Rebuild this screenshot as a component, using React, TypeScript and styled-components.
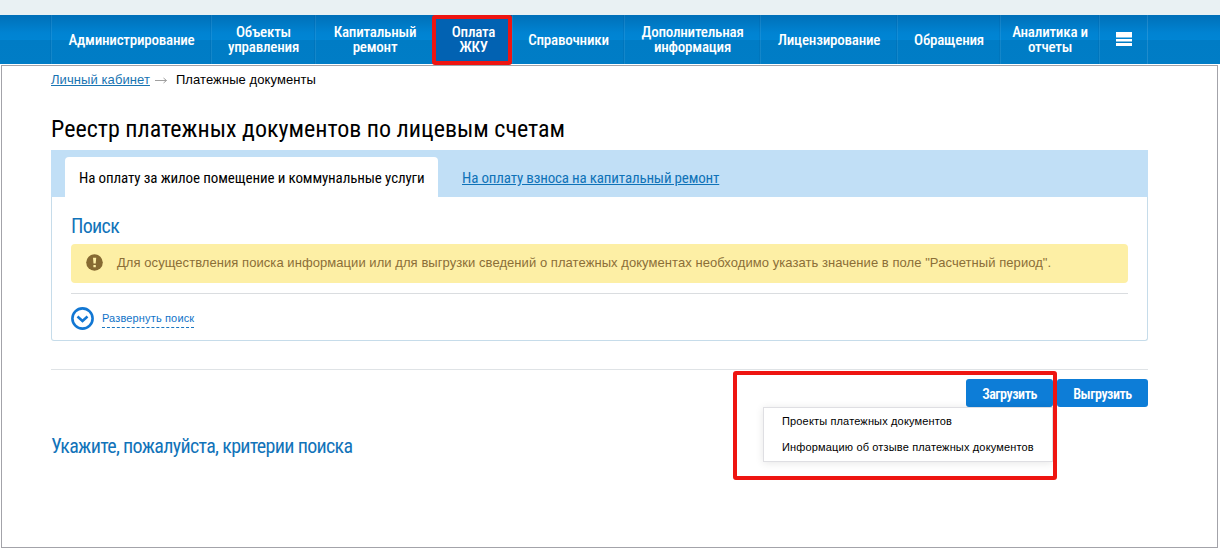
import React from "react";
import styled, { createGlobalStyle, css } from "styled-components";

const GlobalStyle = createGlobalStyle`
  * { box-sizing: border-box; }
  body {
    margin: 0;
    background: #fff;
    font-family: "Liberation Sans", Arial, sans-serif;
    color: #000;
  }
`;

const condensed = css`
  font-family: "Roboto Condensed", Roboto, sans-serif;
  font-stretch: 75%;
`;

const Page = styled.div`
  width: 1220px;
  height: 550px;
  overflow: hidden;
`;

const TopStrip = styled.div`
  height: 15px;
  background: #e9f1f3;
`;

const Nav = styled.nav`
  display: flex;
  height: 49px;
  padding-left: 51px;
  background: linear-gradient(#0070b8 0, #0083d2 18px, #0085d4 25px, #007cc5 25px, #007dc6 100%);
`;

const NavItem = styled.a<{ $width: number; $active?: boolean }>`
  ${condensed}
  position: relative;
  display: flex;
  align-items: center;
  justify-content: center;
  width: ${(p) => p.$width}px;
  height: 49px;
  padding-top: 1px;
  border-left: 1px solid rgba(255, 255, 255, 0.08);
  box-shadow: -1px 0 0 rgba(0, 60, 120, 0.1);
  color: #fff;
  font-size: 15px;
  font-weight: 500;
  letter-spacing: -0.22px;
  line-height: 15px;
  text-align: center;
  white-space: pre-line;
  ${(p) => p.$active && "background: #0262b2;"}
`;

const MenuIcon = styled.svg`
  margin-bottom: 2px;
`;

const NavEnd = styled.div`
  width: 1px;
  background: rgba(255, 255, 255, 0.12);
`;

const Highlight = styled.div`
  position: absolute;
  border: 4px solid #ee1511;
  border-radius: 3px;
  z-index: 5;
  pointer-events: none;
`;

const NavHighlight = styled(Highlight)`
  inset: 0 0 -1px -3px;
`;

const Frame = styled.main`
  width: 1217px;
  height: 483px;
  margin: 1px 0 0 1px;
  padding: 6px 69px 0 49px;
  border: 1px solid #a3a3a9;
`;

const Breadcrumbs = styled.div`
  display: flex;
  height: 16px;
  font-size: 13px;
  letter-spacing: 0.08px;
  line-height: 16px;
`;

const CrumbLink = styled.a`
  color: #1874b2;
  text-decoration: underline;
`;

const CrumbArrow = styled.svg`
  margin: 4px 9px 0 5px;
`;

const Title = styled.h1`
  ${condensed}
  margin: 26px 0 6px;
  height: 30px;
  font-size: 24px;
  font-weight: 400;
  line-height: 30px;
`;

const Tabs = styled.div`
  display: flex;
  height: 47px;
  padding: 7px 14px 0;
  background: #c1dff6;
`;

const Tab = styled.a<{ $active?: boolean }>`
  ${condensed}
  height: 40px;
  font-size: 15px;
  letter-spacing: ${(p) => (p.$active ? "-0.12px" : "-0.17px")};
  line-height: 42px;
  white-space: nowrap;
  ${(p) =>
    p.$active
      ? "width: 373px; padding-left: 14px; background: #fff; border-radius: 4px 4px 0 0;"
      : "margin-left: 24px; color: #0f73b8; text-decoration: underline;"}
`;

const SearchPanel = styled.section`
  height: 144px;
  padding: 15px 19px 0;
  border: 1px solid #c6dcea;
  border-top: 0;
  border-radius: 0 0 3px 3px;
`;

const PanelTitle = styled.h2`
  ${condensed}
  margin: 0;
  height: 32px;
  color: #1173b9;
  font-size: 20px;
  font-weight: 400;
  letter-spacing: -0.68px;
  line-height: 28px;
`;

const Notice = styled.div`
  display: flex;
  align-items: center;
  height: 39px;
  padding: 0 0 2px 15px;
  gap: 14px;
  border-radius: 4px;
  background: #fdefa5;
  color: #8b6e37;
  font-size: 13px;
  letter-spacing: 0.06px;
`;

const Expand = styled.div`
  display: flex;
  align-items: center;
  gap: 8px;
  margin-top: 10px;
  padding-top: 13px;
  border-top: 1px solid #dadde0;
`;

const ExpandLabel = styled.a`
  height: 19px;
  border-bottom: 1px dashed #1b77c0;
  color: #1173c8;
  font-size: 11px;
  letter-spacing: 0.15px;
  line-height: 19px;
`;

const Results = styled.section`
  margin-top: 28px;
  padding-top: 9px;
  border-top: 1px solid #dfe3e6;
`;

const Actions = styled.div`
  display: flex;
  justify-content: flex-end;
  gap: 4px;
`;

const Upload = styled.div`
  position: relative;
`;

const Button = styled.button<{ $width: number }>`
  ${condensed}
  display: block;
  width: ${(p) => p.$width}px;
  height: 28px;
  padding: 1px 0 0;
  border: 0;
  border-radius: 3px;
  background: #0d7dd7;
  color: #fff;
  font-size: 14px;
  font-weight: 600;
  letter-spacing: -0.45px;
`;

const Menu = styled.div`
  position: absolute;
  top: 28px;
  right: 0;
  width: 290px;
  height: 55px;
  padding-left: 18px;
  border: 1px solid #dfdfe3;
  background: #fff;
  box-shadow: 0 1px 8px rgba(0, 0, 0, 0.1);
`;

const MenuItem = styled.div`
  height: 26px;
  font-size: 11px;
  letter-spacing: 0.155px;
  line-height: 26px;
  white-space: nowrap;
`;

const UploadHighlight = styled(Highlight)`
  top: -8px;
  right: -4px;
  width: 324px;
  height: 109px;
`;

const Hint = styled.p`
  ${condensed}
  margin: 25px 0 0;
  color: #1173b9;
  font-size: 20px;
  letter-spacing: -0.68px;
  line-height: 28px;
`;

const menu = [
  { label: "Администрирование", width: 160 },
  { label: "Объекты\nуправления", width: 104 },
  { label: "Капитальный\nремонт", width: 119 },
  { label: "Оплата\nЖКУ", width: 78, active: true },
  { label: "Справочники", width: 112 },
  { label: "Дополнительная\nинформация", width: 136 },
  { label: "Лицензирование", width: 137 },
  { label: "Обращения", width: 103 },
  { label: "Аналитика и\nотчеты", width: 99 },
];

function App() {
  return (
    <Page>
      <GlobalStyle />
      <TopStrip />
      <Nav>
        {menu.map((item) => (
          <NavItem key={item.label} $width={item.width} $active={item.active}>
            <span>{item.label}</span>
            {item.active && <NavHighlight />}
          </NavItem>
        ))}
        <NavItem $width={48}>
          <MenuIcon width="16" height="14" fill="#fff">
            <path d="M0 0h16v5.5H0zM0 7h16v2.5H0zM0 11h16v3H0z" />
          </MenuIcon>
        </NavItem>
        <NavEnd />
      </Nav>
      <Frame>
        <Breadcrumbs>
          <CrumbLink>Личный кабинет</CrumbLink>
          <CrumbArrow width="12" height="9" fill="none" stroke="#a0a0a0">
            <path d="M0 4.5h11.5M8.5 2l3 2.5-3 2.5" />
          </CrumbArrow>
          <span>Платежные документы</span>
        </Breadcrumbs>
        <Title>Реестр платежных документов по лицевым счетам</Title>
        <Tabs>
          <Tab $active>На оплату за жилое помещение и коммунальные услуги</Tab>
          <Tab>На оплату взноса на капитальный ремонт</Tab>
        </Tabs>
        <SearchPanel>
          <PanelTitle>Поиск</PanelTitle>
          <Notice>
            <svg width="17" height="17" viewBox="0 0 17 17">
              <circle cx="8.5" cy="8.5" r="8.3" fill="#866a32" />
              <path d="M7 3.7h3.2l-.5 5.8H7.5zM7.4 11h2.4v2.2H7.4z" fill="#fdefa5" />
            </svg>
            <span>
              Для осуществления поиска информации или для выгрузки сведений о платежных документах необходимо указать
              значение в поле "Расчетный период".
            </span>
          </Notice>
          <Expand>
            <svg width="23" height="23" fill="none" stroke="#1277d3">
              <circle cx="11.5" cy="11.5" r="10.1" strokeWidth="2.6" />
              <path d="M6.5 9.5l5 4.5 5-4.5" strokeWidth="2.5" />
            </svg>
            <ExpandLabel>Развернуть поиск</ExpandLabel>
          </Expand>
        </SearchPanel>
        <Results>
          <Actions>
            <Upload>
              <Button $width={87}>Загрузить</Button>
              <Menu>
                <MenuItem>Проекты платежных документов</MenuItem>
                <MenuItem>Информацию об отзыве платежных документов</MenuItem>
              </Menu>
              <UploadHighlight />
            </Upload>
            <Button $width={91}>Выгрузить</Button>
          </Actions>
          <Hint>Укажите, пожалуйста, критерии поиска</Hint>
        </Results>
      </Frame>
    </Page>
  );
}

export default App;
